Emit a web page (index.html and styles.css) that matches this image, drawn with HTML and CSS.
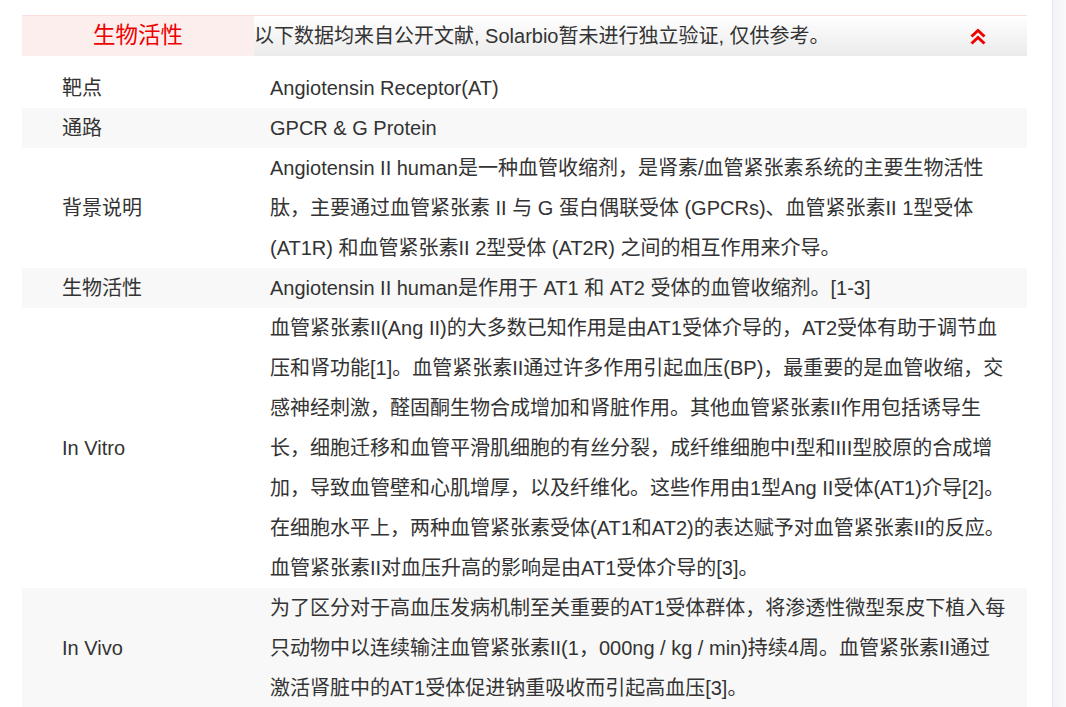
FILE: index.html
```html
<!DOCTYPE html>
<html lang="zh-CN">
<head>
<meta charset="utf-8">
<title>生物活性</title>
<link rel="stylesheet" href="styles.css">
</head>
<body>
<div class="page">
  <main class="main">
    <section class="bio">
      <header class="bio-head">
        <div class="bio-title">生物活性</div>
        <div class="bio-note">
          <span>以下数据均来自公开文献, Solarbio暂未进行独立验证, 仅供参考。</span>
          <svg class="chev" width="18" height="18" viewBox="0 0 18 18" aria-hidden="true">
            <polyline points="2.5,8.5 9,2.5 15.5,8.5" fill="none" stroke="#ee0000" stroke-width="3"/>
            <polyline points="2.5,15.5 9,9.5 15.5,15.5" fill="none" stroke="#ee0000" stroke-width="3"/>
          </svg>
        </div>
      </header>
      <div class="rows">
        <div class="row">
          <div class="label">靶点</div>
          <div class="value">Angiotensin Receptor(AT)</div>
        </div>
        <div class="row alt">
          <div class="label">通路</div>
          <div class="value">GPCR &amp; G Protein</div>
        </div>
        <div class="row">
          <div class="label">背景说明</div>
          <div class="value">Angiotensin II human是一种血管收缩剂，是肾素/血管紧张素系统的主要生物活性肽，主要通过血管紧张素 II 与 G 蛋白偶联受体 (GPCRs)、血管紧张素II 1型受体 (AT1R) 和血管紧张素II 2型受体 (AT2R) 之间的相互作用来介导。</div>
        </div>
        <div class="row alt">
          <div class="label">生物活性</div>
          <div class="value">Angiotensin II human是作用于 AT1 和 AT2 受体的血管收缩剂。[1-3]</div>
        </div>
        <div class="row">
          <div class="label">In Vitro</div>
          <div class="value">血管紧张素II(Ang II)的大多数已知作用是由AT1受体介导的，AT2受体有助于调节血压和肾功能[1]。血管紧张素II通过许多作用引起血压(BP)，最重要的是血管收缩，交感神经刺激，醛固酮生物合成增加和肾脏作用。其他血管紧张素II作用包括诱导生长，细胞迁移和血管平滑肌细胞的有丝分裂，成纤维细胞中I型和III型胶原的合成增加，导致血管壁和心肌增厚，以及纤维化。这些作用由1型Ang II受体(AT1)介导[2]。在细胞水平上，两种血管紧张素受体(AT1和AT2)的表达赋予对血管紧张素II的反应。血管紧张素II对血压升高的影响是由AT1受体介导的[3]。</div>
        </div>
        <div class="row alt">
          <div class="label">In Vivo</div>
          <div class="value">为了区分对于高血压发病机制至关重要的AT1受体群体，将渗透性微型泵皮下植入每只动物中以连续输注血管紧张素II(1，000ng / kg / min)持续4周。血管紧张素II通过激活肾脏中的AT1受体促进钠重吸收而引起高血压[3]。</div>
        </div>
      </div>
    </section>
  </main>
  <aside class="side"></aside>
</div>
</body>
</html>
```

FILE: styles.css
```css
html, body {
  margin: 0;
  padding: 0;
  background: #ffffff;
}

body {
  font-family: "Liberation Sans", Arial, "Noto Sans CJK SC", sans-serif;
  color: #333333;
  font-size: 20px;
  overflow: hidden;
}

.page {
  display: flex;
  width: 1066px;
  height: 707px;
  overflow: hidden;
}

.main {
  flex: 0 0 1052px;
  box-sizing: border-box;
  padding: 15px 25px 0 22px;
}

.side {
  flex: 1 1 auto;
  border-left: 1px solid #e6e6ef;
  background: linear-gradient(to right, #f3f3f7, #f9f9fb);
}

.bio-head {
  display: flex;
  height: 40px;
  border-top: 1px solid #fbdede;
}

.bio-title {
  flex: 0 0 232px;
  background: #fdeeee;
  color: #ee0000;
  font-size: 22.5px;
  line-height: 40px;
  text-align: center;
}

.bio-note {
  flex: 1 1 auto;
  display: flex;
  align-items: center;
  justify-content: space-between;
  padding: 0 40px 0 0;
  background: linear-gradient(to bottom, #ffffff, #ebebeb);
  line-height: 40px;
}

.chev {
  display: block;
  margin-top: 2px;
}

.rows {
  margin-top: 12px;
}

.row {
  display: grid;
  grid-template-columns: 232px 1fr;
  line-height: 40px;
}

.row.alt {
  background: #f8f8f8;
}

.label {
  padding-left: 40px;
  display: flex;
  align-items: center;
}

.value {
  padding: 0 20px 0 16px;
}
```
